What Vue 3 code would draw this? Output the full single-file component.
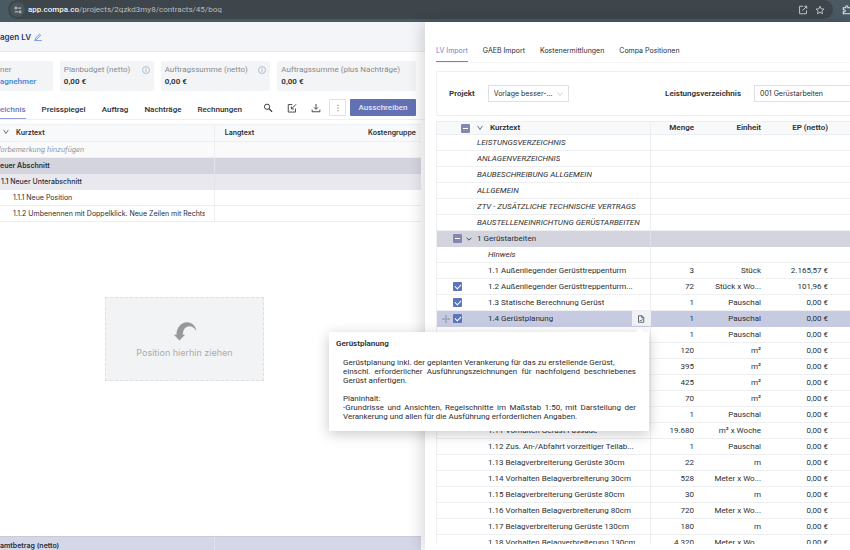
<script setup>
const cards = [
  { label: 'Planbudget (netto)', value: '0,00 €', info: true, kind: 'budget' },
  { label: 'Auftragssumme (netto)', value: '0,00 €', info: true, kind: 'order' },
  { label: 'Auftragssumme (plus Nachträge)', value: '0,00 €', info: false, kind: 'total' },
]

const leftTabs = ['Preisspiegel', 'Auftrag', 'Nachträge', 'Rechnungen']
const rightTabs = ['LV Import', 'GAEB Import', 'Kostenermittlungen', 'Compa Positionen']

const contractRows = [
  { text: 'Vorbemerkung hinzufügen', kind: 'note' },
  { text: 'euer Abschnitt', kind: 'section' },
  { text: '1.1 Neuer Unterabschnitt', kind: 'subsection' },
  { text: '1.1.1 Neue Position', kind: 'item' },
  { text: '1.1.2 Umbenennen mit Doppelklick. Neue Zeilen mit Rechtsklick', kind: 'item' },
]

const importRows = [
  { text: 'LEISTUNGSVERZEICHNIS', kind: 'head' },
  { text: 'ANLAGENVERZEICHNIS', kind: 'head' },
  { text: 'BAUBESCHREIBUNG ALLGEMEIN', kind: 'head' },
  { text: 'ALLGEMEIN', kind: 'head' },
  { text: 'ZTV - ZUSÄTZLICHE TECHNISCHE VERTRAGS', kind: 'head' },
  { text: 'BAUSTELLENEINRICHTUNG GERÜSTARBEITEN', kind: 'head' },
  { text: '1 Gerüstarbeiten', kind: 'group' },
  { text: 'Hinweis', kind: 'hint' },
  { text: '1.1 Außenliegender Gerüsttreppenturm', qty: '3', unit: 'Stück', price: '2.165,57 €' },
  { text: '1.2 Außenliegender Gerüsttreppenturm...', qty: '72', unit: 'Stück x Wo...', price: '101,96 €', checked: true },
  { text: '1.3 Statische Berechnung Gerüst', qty: '1', unit: 'Pauschal', price: '0,00 €', checked: true },
  { text: '1.4 Gerüstplanung', qty: '1', unit: 'Pauschal', price: '0,00 €', checked: true, kind: 'active' },
  { text: '', qty: '1', unit: 'Pauschal', price: '0,00 €' },
  { text: '', qty: '120', unit: 'm²', price: '0,00 €' },
  { text: '', qty: '395', unit: 'm²', price: '0,00 €' },
  { text: '', qty: '425', unit: 'm²', price: '0,00 €' },
  { text: '', qty: '70', unit: 'm²', price: '0,00 €' },
  { text: '', qty: '1', unit: 'Pauschal', price: '0,00 €' },
  { text: '1.11 Vorhalten Gerüst Fassade', qty: '19.680', unit: 'm² x Woche', price: '0,00 €' },
  { text: '1.12 Zus. An-/Abfahrt vorzeitiger Teilab...', qty: '1', unit: 'Pauschal', price: '0,00 €' },
  { text: '1.13 Belagverbreiterung Gerüste 30cm', qty: '22', unit: 'm', price: '0,00 €' },
  { text: '1.14 Vorhalten Belagverbreiterung 30cm', qty: '528', unit: 'Meter x Wo...', price: '0,00 €' },
  { text: '1.15 Belagverbreiterung Gerüste 80cm', qty: '30', unit: 'm', price: '0,00 €' },
  { text: '1.16 Vorhalten Belagverbreiterung 80cm', qty: '720', unit: 'Meter x Wo...', price: '0,00 €' },
  { text: '1.17 Belagverbreiterung Gerüste 130cm', qty: '180', unit: 'm', price: '0,00 €' },
  { text: '1.18 Vorhalten Belagverbreiterung 130cm', qty: '4.320', unit: 'Meter x Wo...', price: '0,00 €' },
]
</script>

<template>
  <div class="page">
    <header class="browser">
      <div class="address">
        <span class="site">
          <svg viewBox="0 0 10 10" class="i8"><g fill="none" stroke="#d5dadd" stroke-width="1.2"><circle cx="2.4" cy="2.6" r="1.3" /><path d="M5 2.6h4M1 7.3h4" /><circle cx="7.6" cy="7.3" r="1.3" /></g></svg>
        </span>
        <span class="url wide"><b>app.compa.co</b>/projects/2qzkd3my8/contracts/45/boq</span>
        <svg viewBox="0 0 16 16" class="i10"><g fill="none" stroke="#c9ced1" stroke-width="1.5"><path d="M8 2H2.5v12h11V8.500M10 2h4v4M14 2L7 9" /></g></svg>
        <svg viewBox="0 0 16 16" class="i10"><path d="M8 1.800l1.800 4.300 4.600.4-3.500 3 1.100 4.600L8 11.600l-4 2.500 1.100-4.600-3.500-3 4.600-.4z" fill="none" stroke="#c9ced1" stroke-width="1.400" /></svg>
      </div>
      <svg viewBox="0 0 16 16" class="i10"><path d="M2 4.500h4V3a1.700 1.700 0 0 1 3.400 0v1.500H14V14H2v-3h1.500a1.700 1.700 0 0 0 0-3.400H2z" fill="none" stroke="#dfe3e5" stroke-width="1.700" /></svg>
    </header>

    <main class="split">
      <section class="contract">
        <div class="title">
          <h1>agen LV</h1>
          <a href="#" aria-label="Umbenennen">
            <svg viewBox="0 0 16 16" class="i8"><path d="M3 10.500L10.800 2.200l2.500 2.300L5.500 12.700l-3 .5zM.5 15.200h15" fill="none" stroke="#4f80e8" stroke-width="1.600" /></svg>
          </a>
        </div>

        <div class="cards wide">
          <div class="card client">
            <span class="label">ner</span>
            <a href="#">agnehmer</a>
          </div>
          <div v-for="c in cards" :key="c.kind" class="card" :class="c.kind">
            <span class="label">{{ c.label }}
              <svg v-if="c.info" viewBox="0 0 16 16" class="i8"><circle cx="8" cy="8" r="7" fill="none" stroke="#8fa3bd" stroke-width="1.300" /><path d="M8 7v4.500M8 4v1.600" stroke="#8fa3bd" stroke-width="1.500" /></svg>
            </span>
            <strong>{{ c.value }}</strong>
          </div>
        </div>

        <div class="toolbar wide">
          <nav class="tabs">
            <a href="#" class="on">eichnis</a>
            <a v-for="t in leftTabs" :key="t" href="#">{{ t }}</a>
          </nav>
          <div class="actions">
            <button class="icon" aria-label="Suchen">
              <svg viewBox="0 0 16 16" class="i10"><circle cx="6.500" cy="6" r="4.200" fill="none" stroke="#3c4045" stroke-width="1.600" /><path d="M9.700 9.200L14.500 14" stroke="#3c4045" stroke-width="2" /></svg>
            </button>
            <button class="icon" aria-label="Bearbeiten">
              <svg viewBox="0 0 16 16" class="i10"><path d="M8.500 2.500H2v12h11.500V9M14.500 2L7.500 9M7 5.500v4h4" fill="none" stroke="#3c4045" stroke-width="1.500" /></svg>
            </button>
            <button class="icon" aria-label="Herunterladen">
              <svg viewBox="0 0 16 16" class="i10"><path d="M8 1.500v8M4.800 7L8 10.200 11.200 7M1.800 10.500v3.500h12.400v-3.500" fill="none" stroke="#3c4045" stroke-width="1.500" /></svg>
            </button>
            <button class="more" aria-label="Mehr">
              <svg viewBox="0 0 16 16" class="i8"><g fill="#4d5156"><circle cx="8" cy="2.500" r="1.200" /><circle cx="8" cy="8" r="1.200" /><circle cx="8" cy="13.500" r="1.200" /></g></svg>
            </button>
            <button class="primary">Ausschreiben</button>
          </div>
        </div>

        <div class="contract-scroll">
          <table class="grid contract-grid">
            <colgroup><col class="c-text" /><col class="c-long" /><col class="c-cost" /></colgroup>
            <thead>
              <tr>
                <th><svg viewBox="0 0 10 10" class="i6"><path d="M1 1.500l4 6 4-6" fill="none" stroke="#4a4e54" stroke-width="1.300" /></svg>Kurztext</th>
                <th>Langtext</th>
                <th class="num">Kostengruppe</th>
              </tr>
            </thead>
            <tbody>
              <tr v-for="r in contractRows" :key="r.text" :class="r.kind">
                <td><div class="clip">{{ r.text }}</div></td>
                <td></td>
                <td></td>
              </tr>
            </tbody>
          </table>
        </div>

        <div class="canvas">
          <div class="drop">
            <svg viewBox="0 0 24 20" class="arrow"><path d="M24 9.500C21 4 14.500 2.800 11.500 7.200 10 9.400 9.800 11.500 9.700 13.400H12L6.200 19.600.2 13.400H3C3.200 5.500 8 .3 14 .3 19.500.3 23.500 4.500 24 9.500z" fill="#999" /></svg>
            <span>Position hierhin ziehen</span>
          </div>
        </div>

        <footer class="grand-total"><span>amtbetrag (netto)</span><span></span></footer>
      </section>

      <section class="import">
        <nav class="tabs">
          <a v-for="(t, i) in rightTabs" :key="t" href="#" :class="{ on: i === 0 }">{{ t }}</a>
        </nav>

        <div class="filter">
          <label for="project" class="wide">Projekt</label>
          <div class="select short">
            <select id="project"><option>Vorlage besser-...</option></select>
            <svg viewBox="0 0 10 10" class="i6"><path d="M1 2.500l4 5 4-5" fill="none" stroke="#b9bcc1" stroke-width="1.200" /></svg>
          </div>
          <label for="boq" class="second wide">Leistungsverzeichnis</label>
          <div class="select long">
            <select id="boq"><option>001 Gerüstarbeiten</option></select>
          </div>
        </div>

        <div class="import-scroll wide">
          <table class="grid import-grid">
            <colgroup><col class="c-text" /><col class="c-qty" /><col class="c-unit" /><col class="c-price" /><col /></colgroup>
            <thead>
              <tr>
                <th>
                  <div class="line root">
                    <input type="checkbox" :indeterminate="true" aria-label="Alle auswählen" />
                    <svg viewBox="0 0 10 10" class="i6"><path d="M1 1.500l4 6 4-6" fill="none" stroke="#4a4e54" stroke-width="1.300" /></svg>
                    <span>Kurztext</span>
                  </div>
                </th>
                <th class="num">Menge</th>
                <th class="num">Einheit</th>
                <th class="num">EP (netto)</th>
                <th></th>
              </tr>
            </thead>
            <tbody>
              <tr v-for="(r, i) in importRows" :key="i" :class="r.kind">
                <td>
                  <div class="line">
                    <svg v-if="r.kind === 'active'" viewBox="0 0 16 16" class="i8 move"><path d="M8 1v14M1 8h14M6 3l2-2 2 2M6 13l2 2 2-2M3 6L1 8l2 2M13 6l2 2-2 2" fill="none" stroke="#7480a0" stroke-width="1.200" /></svg>
                    <input v-if="r.checked" type="checkbox" checked :aria-label="r.text" />
                    <input v-if="r.kind === 'group'" type="checkbox" :indeterminate="true" :aria-label="r.text" />
                    <svg v-if="r.kind === 'group'" viewBox="0 0 10 10" class="i6"><path d="M1 3l4 4 4-4" fill="none" stroke="#33363c" stroke-width="1.500" /></svg>
                    <span class="name">{{ r.text }}</span>
                    <button v-if="r.kind === 'active'" class="doc" aria-label="Langtext">
                      <svg viewBox="0 0 16 16" class="i8"><path d="M3 1.500h7l3.500 3.500v9.500H3zM9.500 1.500v4h4M5.500 10l2 2 3.500-3.500" fill="none" stroke="#3c4045" stroke-width="1.500" /></svg>
                    </button>
                  </div>
                </td>
                <td class="num">{{ r.qty }}</td>
                <td class="num">{{ r.unit }}</td>
                <td class="num">{{ r.price }}</td>
                <td></td>
              </tr>
            </tbody>
          </table>
        </div>

        <aside class="tip wide" role="tooltip">
          <h2>Gerüstplanung</h2>
          <p>Gerüstplanung inkl. der geplanten Verankerung für das zu erstellende Gerüst,<br />einschl. erforderlicher Ausführungszeichnungen für nachfolgend beschriebenes Gerüst anfertigen.</p>
          <p>Planinhalt:<br />-Grundrisse und Ansichten, Regelschnitte im Maßstab 1:50, mit Darstellung der Verankerung und allen für die Ausführung erforderlichen Angaben.</p>
        </aside>
      </section>
    </main>
  </div>
</template>

<style>
body {
  margin: 0;
  overflow: hidden;
}
</style>

<style scoped>
.page {
  height: 100vh;
  display: flex;
  flex-direction: column;
  overflow: hidden;
  font: 7px/10px Inter, "Liberation Sans", sans-serif;
  color: #2b2e33;
  background: #fff;
}
.page * { box-sizing: border-box; }
.wide { font-family: Roboto, Inter, sans-serif; font-size: 8px; }
svg { display: block; flex: none; }
.i6 { width: 6px; height: 6px; }
.i8 { width: 8px; height: 8px; }
.i10 { width: 10px; height: 10px; }
a { color: inherit; text-decoration: none; }
button, select { font: inherit; color: inherit; margin: 0; padding: 0; }

.browser {
  flex: none;
  height: 22px;
  display: flex;
  gap: 9px;
  background: #4a5a63;
  padding-bottom: 3px;
  align-items: center;
}
.address {
  flex: 1;
  height: 19px;
  margin-left: 8px;
  padding: 0 8px 0 2px;
  display: flex;
  align-items: center;
  gap: 7px;
  border-radius: 10px;
  background: #3e464b;
}
.browser > svg { margin-right: -2px; }
.site {
  width: 15px;
  height: 15px;
  border-radius: 50%;
  background: #4a555b;
  display: grid;
  place-items: center;
}
.url { flex: 1; color: #b6bcc0; margin-left: -4px; }
.url b { color: #f1f3f4; font-weight: 500; }

.split { flex: 1; min-height: 0; display: grid; grid-template-columns: minmax(0, 1fr) minmax(0, 1fr); }
.contract {
  min-width: 0;
  min-height: 0;
  display: flex;
  flex-direction: column;
}
.title {
  display: flex;
  align-items: center;
  gap: 3px;
  height: 30px;
  background: #f4f5f8;
  border-bottom: 1px solid #e6e8ec;
}
h1 { margin: 0; font-size: 8px; font-weight: 600; color: #30365f; }
.cards { display: flex; gap: 7px; padding: 9px 9px 0 0; }
.card {
  height: 30px;
  min-width: 0;
  padding: 4px;
  border-radius: 2px;
  background: #f3f4f6;
  display: flex;
  flex-direction: column;
  gap: 2px;
  white-space: nowrap;
}
.label { display: flex; justify-content: space-between; align-items: center; color: #888b90; }
.card strong { font-weight: 600; }
.client { flex: 49; padding-left: 0; }
.client a { color: #4a8ad8; font-weight: 600; }
.budget { flex: 86; }
.order { flex: 102; }
.total { flex: 131; }

.toolbar {
  display: flex;
  justify-content: space-between;
  height: 29px;
  padding-right: 9px;
  border-bottom: 1px solid #eff0f3;
}
.tabs { display: flex; gap: 16px; font-weight: 500; white-space: nowrap; }
.tabs a { padding-top: 14px; }
.toolbar .tabs a { border-bottom: 1px solid transparent; }
.toolbar .tabs a.on { color: #6777c0; border-bottom-color: #8f9bd2; }
.actions { display: flex; align-items: center; gap: 14px; padding-top: 5px; }
.icon { border: 0; background: none; display: grid; place-items: center; width: 10px; height: 16px; }
.more {
  width: 17px;
  height: 17px;
  margin-left: -6px;
  display: grid;
  place-items: center;
  background: #fff;
  border: 1px solid #dfe1e5;
  border-radius: 1px;
}
.primary {
  width: 66px;
  height: 17px;
  margin-left: -10px;
  border: 0;
  border-radius: 1px;
  background: #6171b3;
  color: #e3e6f3;
  font-weight: 500;
}

.grid { border-collapse: separate; border-spacing: 0; table-layout: fixed; width: 100%; }
.grid th {
  height: 18px;
  padding: 0;
  font-weight: 600;
  text-align: left;
  background: #f8f9fb;
  border-bottom: 1px solid #eceef1;
}
.grid td { height: 16px; padding: 0; border-bottom: 1px solid #eeeff1; white-space: nowrap; }
.grid th:first-child, .grid td:first-child { border-right: 1px solid #eceef1; }
.grid .num { text-align: right; padding-right: 7px; }

.contract-scroll { margin: 4px 4px 0 0; }
.contract-grid th { border-top: 1px solid #eff0f3; }
.contract-grid th:first-child svg { display: inline-block; margin: 0 7px 0 3px; }
.contract-grid .c-text { width: 51%; }
.contract-grid .c-long { width: 34%; }
.contract-grid th:nth-child(2) { padding-left: 10px; }
.contract-grid .num { padding-right: 5px; }
.clip { overflow: hidden; white-space: nowrap; margin-right: 9px; }
.note td { background: #fafafb; }
.note .clip { font-style: italic; color: #8b929e; text-indent: -4px; }
.section td { background: #d4d4de; border-color: #d4d4de; font-weight: 600; }
.subsection td { background: #e8e8ee; border-color: #e8e8ee; font-weight: 500; }
.subsection .clip { padding-left: 1px; }
.item .clip { padding-left: 13px; }
.section td:first-child, .subsection td:first-child { border-right-color: #e3e3ea; }

.canvas { flex: 1; display: flex; justify-content: center; padding: 75px 56px 0 0; }
.drop {
  width: 159px;
  height: 84px;
  display: flex;
  flex-direction: column;
  align-items: center;
  gap: 7px;
  padding-top: 24px;
  border: 1px dashed #dddfe3;
  background: #f2f3f5;
  color: #aaabae;
  font-size: 9px;
}
.arrow { width: 24px; height: 19px; }
.grand-total {
  flex: none;
  height: 14px;
  margin-right: 4px;
  display: grid;
  grid-template-columns: 51% 1fr;
  border-top: 1px solid #c9cad4;
  background: #d5d7e9;
  font-weight: 600;
}
.grand-total span { padding-top: 4px; }
.grand-total span:first-child { border-right: 1px solid #e1e2ee; }

.import {
  position: relative;
  min-width: 0;
  min-height: 0;
  display: flex;
  flex-direction: column;
  padding-left: 11px;
  background: #fff;
  box-shadow: -3px 0 14px rgba(0, 0, 0, 0.16);
}
.import .tabs { height: 41px; gap: 15px; border-bottom: 1px solid #f3f3f5; }
.import .tabs a { padding-top: 24px; font-weight: 400; }
.import .tabs a.on { color: #6b83cc; border-bottom: 1px solid #6b83cc; }
.filter {
  height: 45px;
  margin-top: 8px;
  padding-left: 12px;
  display: flex;
  align-items: center;
  gap: 13px;
  border: 1px solid #eeeff1;
  border-right: 0;
  border-radius: 2px 0 0 2px;
}
.filter label { font-weight: 600; white-space: nowrap; }
.second { margin-left: auto; }
.select { position: relative; display: flex; align-items: center; height: 17px; border: 1px solid #dfe0e3; }
.select select {
  flex: 1;
  min-width: 0;
  height: 15px;
  padding: 0 0 0 5px;
  border: 0;
  appearance: none;
  background: none;
}
.select svg { margin-right: 5px; }
.short { width: 81px; }
.long { width: 96px; border-right: 0; }

.import-scroll { height: 423px; margin-top: 5px; overflow: hidden; }
.import-grid { border-left: 1px solid #eceef1; }
.import-grid th { height: 14px; border-top: 1px solid #eceef1; }
.import-grid .c-text { width: 214px; }
.import-grid .c-qty { width: 50px; }
.import-grid .c-unit, .import-grid .c-price { width: 67px; }
.line { position: relative; display: flex; align-items: center; height: 15px; padding-left: 51px; margin-right: 10px; }
.line.root { height: 12px; padding-left: 24px; gap: 7px; }
.line .name { overflow: hidden; }
.line input {
  appearance: none;
  flex: none;
  width: 9px;
  height: 9px;
  margin: 0 26px 0 -35px;
  border-radius: 1px;
  background: #5b74bb;
  display: grid;
  place-items: center;
}
.line input::after {
  content: "";
  width: 5px;
  height: 3px;
  margin-top: -1px;
  border: solid #fff;
  border-width: 0 0 1px 1px;
  rotate: -45deg;
}
.line input:indeterminate { background: #8388b0; }
.line input:indeterminate::after { height: 0; margin: 0; border-width: 1px 0 0; rotate: none; }
.line.root input { margin: 0; }
.head .line { padding-left: 40px; font-style: italic; }
.hint .line { font-style: italic; }
.group td { background: #d4d4de; border-color: #d4d4de; }
.group td:first-child { border-right-color: #dfdfe6; }
.group .line { padding-left: 16px; gap: 4px; }
.group .line input { margin: 0; }
.group .line svg { margin-right: 1px; }
.active td { background: #c6cbe2; border-color: #c6cbe2; }
.active .line { padding-left: 5px; margin-right: 0; gap: 3px; }
.active .line input { margin: 0 23px 0 0; }
.doc {
  margin-left: auto;
  width: 18px;
  height: 15px;
  display: grid;
  place-items: center;
  border: 0;
  background: #f1f2f5;
}

.tip {
  position: absolute;
  top: 310px;
  left: -96px;
  width: 320px;
  padding: 7px 13px 10px 14px;
  background: #fff;
  border-radius: 1px;
  box-shadow: 0 3px 14px rgba(0, 0, 0, 0.22);
  line-height: 9px;
}
.tip::before {
  content: "";
  position: absolute;
  top: -4px;
  right: 4px;
  border: solid transparent;
  border-width: 0 5px 4px;
  border-bottom-color: #fff;
}
.tip h2 { margin: 0 0 10px -7px; font-size: 8px; font-weight: 600; }
.tip p { margin: 0 0 9px; text-align: justify; }
.tip p:last-child { margin-bottom: 0; }
</style>
